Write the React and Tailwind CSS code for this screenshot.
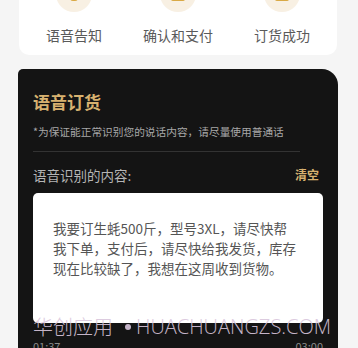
import React from 'react';

const STEPS = ['语音告知', '确认和支付', '订货成功'];

const LINES = [
    '我要订生蚝500斤，型号3XL，请尽快帮',
    '我下单，支付后，请尽快给我发货，库存',
    '现在比较缺了，我想在这周收到货物。',
];

function StepIcon({ index }) {
    // only the bottom sliver of each icon shows above the fold
    if (index === 0) {
        return (
            <svg width="16" height="18" viewBox="0 0 16 18" fill="none">
                <rect x="4" y="2" width="8" height="14" rx="3" fill="#d9a945" />
            </svg>
        );
    }
    return (
        <svg width="18" height="18" viewBox="0 0 18 18" fill="none">
            <rect x="2" y="2" width="14" height="14" rx="2" fill="#d9a945" />
        </svg>
    );
}

export default function App() {
    return (
        <div className="relative w-[358px] h-[348px] overflow-hidden bg-[#f5f5f5] font-['Noto_Sans_CJK_SC','Noto_Sans',sans-serif]">
            {/* Steps card */}
            <div className="ml-[19px] w-[318px] -mt-[40px] bg-white rounded-[10px] pt-[16px] pb-[10px] px-[3px]">
                <div className="grid grid-cols-3">
                    {STEPS.map((label, i) => (
                        <div key={label} className="flex flex-col items-center">
                            <div className="w-[36px] h-[36px] rounded-full bg-[#f8f0e3] flex items-center justify-center">
                                <StepIcon index={i} />
                            </div>
                            <span className="mt-[13px] text-[14px] leading-[20px] text-[#5a5a5a]">{label}</span>
                        </div>
                    ))}
                </div>
            </div>

            {/* Voice order card */}
            <div className="ml-[18px] mt-[14px] w-[320px] h-[300px] bg-[#141414] rounded-tl-[5px] rounded-tr-[16px] px-[15px] pt-[21px]">
                <h2 className="text-[17px] leading-[24px] font-bold text-[#d8b270]">语音订货</h2>
                <p className="mt-[10px] text-[10.7px] leading-[16px] text-[#a8a8a8]">
                    *为保证能正常识别您的说话内容，请尽量使用普通话
                </p>
                <div className="mt-[11px] w-[267px] h-px bg-[#333333]" />
                <div className="mt-[13px] flex items-center justify-between pr-[4px]">
                    <span className="text-[13.5px] leading-[20px] text-[#b5b5b5]">语音识别的内容:</span>
                    <button className="text-[12px] leading-[20px] font-bold text-[#d8b270]">清空</button>
                </div>
                <div className="mt-[8px] w-[290px] h-[130px] bg-white rounded-[5px] pt-[25px] px-[20px]">
                    {LINES.map((line) => (
                        <div key={line} className="text-[13.5px] leading-[20px] text-[#555555] whitespace-nowrap">
                            {line}
                        </div>
                    ))}
                </div>
                <div className="mt-[16px] flex justify-between text-[11px] leading-[14px] text-[#8a8a8a]">
                    <span>01:37</span>
                    <span>03:00</span>
                </div>
            </div>

            {/* Watermark */}
            <div className="absolute left-[33px] top-[314px] flex items-center text-[20px] leading-[26px] font-light text-[#d9c6dc] whitespace-nowrap pointer-events-none opacity-90">
                <span>华创应用</span>
                <span className="ml-[12px] mr-[5px] w-[6px] h-[6px] rounded-full bg-[#d9c6dc]" />
                <span className="font-['Open_Sans',sans-serif]">HUACHUANGZS.COM</span>
            </div>
        </div>
    );
}
